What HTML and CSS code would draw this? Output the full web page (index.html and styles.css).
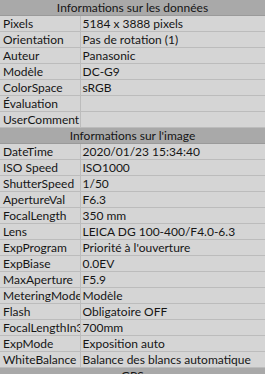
FILE: index.html
```html
<!DOCTYPE html>
<html lang="fr">
<head>
    <meta charset="UTF-8">
    <meta name="viewport" content="width=device-width, initial-scale=1.0">
    <title>Propriétés</title>
    <link rel="stylesheet" href="styles.css">
</head>
<body>
    <table class="props">
        <colgroup>
            <col class="key-col">
            <col class="val-col">
        </colgroup>
        <tr class="section"><td colspan="2">Informations sur les données</td></tr>
        <tr><td class="key">Pixels</td><td>5184 x 3888 pixels</td></tr>
        <tr><td class="key">Orientation</td><td>Pas de rotation (1)</td></tr>
        <tr><td class="key">Auteur</td><td>Panasonic</td></tr>
        <tr><td class="key">Modèle</td><td>DC-G9</td></tr>
        <tr><td class="key">ColorSpace</td><td>sRGB</td></tr>
        <tr><td class="key">Évaluation</td><td></td></tr>
        <tr><td class="key">UserComment</td><td></td></tr>
        <tr class="section"><td colspan="2">Informations sur l'image</td></tr>
        <tr><td class="key">DateTime</td><td>2020/01/23 15:34:40</td></tr>
        <tr><td class="key">ISO Speed</td><td>ISO1000</td></tr>
        <tr><td class="key">ShutterSpeed</td><td>1/50</td></tr>
        <tr><td class="key">ApertureVal</td><td>F6.3</td></tr>
        <tr><td class="key">FocalLength</td><td>350 mm</td></tr>
        <tr><td class="key">Lens</td><td>LEICA DG 100-400/F4.0-6.3</td></tr>
        <tr><td class="key">ExpProgram</td><td>Priorité à l'ouverture</td></tr>
        <tr><td class="key">ExpBiase</td><td>0.0EV</td></tr>
        <tr><td class="key">MaxAperture</td><td>F5.9</td></tr>
        <tr><td class="key">MeteringMode</td><td>Modèle</td></tr>
        <tr><td class="key">Flash</td><td>Obligatoire OFF</td></tr>
        <tr><td class="key">FocalLengthIn35mm</td><td>700mm</td></tr>
        <tr><td class="key">ExpMode</td><td>Exposition auto</td></tr>
        <tr><td class="key">WhiteBalance</td><td>Balance des blancs automatique</td></tr>
        <tr class="section"><td colspan="2">GPS</td></tr>
    </table>
</body>
</html>
```

FILE: styles.css
```css
body {
    margin: 0;
    background-color: #d5d5d5;
    font-family: Lato, "Noto Sans", sans-serif;
    font-size: 12px;
    color: #151515;
    overflow: hidden;
}

.props {
    width: 265px;
    border-collapse: collapse;
    table-layout: fixed;
}

.key-col {
    width: 80px;
}

.props td {
    height: 15px;
    padding: 0 0 0 2px;
    border-bottom: 1px solid #bcbcbc;
    white-space: nowrap;
    overflow: hidden;
    line-height: 15px;
    background-color: #d5d5d5;
}

/* libellés trop longs coupés au bord de la colonne */
.props td.key {
    padding-left: 3px;
    padding-right: 0;
    border-right: 1px solid #bcbcbc;
    text-overflow: clip;
}

.section td {
    background-color: #a9a9a9;
    text-align: center;
    padding: 0;
    border-bottom: 1px solid #9a9a9a;
}
```
